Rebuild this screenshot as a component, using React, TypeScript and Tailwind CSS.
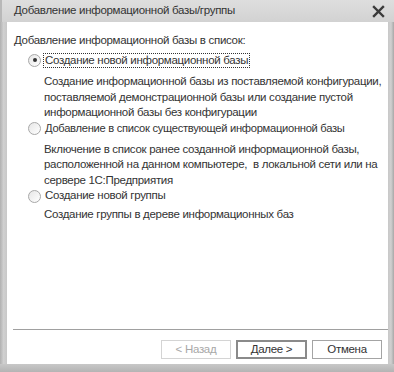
import React from "react";

const font = { fontFamily: '"Liberation Sans", Arial, sans-serif' };

function Radio({ checked }: { checked?: boolean }) {
  return (
    <span className="w-[13px] h-[13px] rounded-full border border-[#a8a8a8] bg-gradient-to-br from-[#e6e6e6] to-white flex items-center justify-center shrink-0">
      {checked && <span className="w-[4px] h-[4px] rounded-full bg-[#333]" />}
    </span>
  );
}

export default function App() {
  return (
    <div
      className="w-[394px] h-[372px] bg-[#cdcdcd] flex flex-col text-[#333] text-[11px] tracking-[-0.3px] overflow-hidden whitespace-nowrap"
      style={font}
    >
      <div className="h-[22px] shrink-0 flex items-center justify-between pl-[12px] pr-[8px] bg-gradient-to-b from-[#dedede] to-[#d2d2d2] border-l-[2px] border-[#b8b8b8]">
        <span className="text-[11.5px] text-[#333]">Добавление информационной базы/группы</span>
        <svg width="13" height="13" viewBox="0 0 13 13" className="mr-[1px]">
          <path d="M2 2 L11 11 M11 2 L2 11" stroke="#3a3a3a" strokeWidth="2.4" strokeLinecap="square" />
        </svg>
      </div>
      <div className="flex-1 flex min-h-0">
        <div className="w-[7px] shrink-0 bg-gradient-to-r from-[#b0b0b0] via-[#d0d0d0] to-[#c8c8c8]" />
        <div className="flex-1 bg-white flex flex-col pt-[10px] px-[6px]">
          <div className="leading-[16px] pl-[1px] text-[11.5px]">Добавление информационной базы в список:</div>
          <div className="mt-[4px] pl-[15px] flex items-center gap-[2px] h-[16px]">
            <Radio checked />
            <span className="border border-dotted border-[#333] leading-[13px] px-[1px] text-[11.5px]">Создание новой информационной базы</span>
          </div>
          <div className="pl-[31px] mt-[6px] leading-[15.5px] text-[11.5px]">
            Создание информационной базы из поставляемой конфигурации,
            <br />
            поставляемой демонстрационной базы или создание пустой
            <br />
            информационной базы без конфигурации
          </div>
          <div className="mt-[0px] pl-[15px] flex items-center gap-[4px] h-[16px] text-[11.2px]">
            <Radio />
            <span>Добавление в список существующей информационной базы</span>
          </div>
          <div className="pl-[31px] mt-[5px] leading-[15.5px] text-[11.5px]">
            Включение в список ранее созданной информационной базы,
            <br />
            расположенной на данном компьютере,&nbsp; в локальной сети или на
            <br />
            сервере 1С:Предприятия
          </div>
          <div className="mt-[0px] pl-[15px] flex items-center gap-[4px] h-[16px] text-[11.5px]">
            <Radio />
            <span>Создание новой группы</span>
          </div>
          <div className="pl-[31px] mt-[3px] leading-[15.5px] text-[11.5px]">Создание группы в дереве информационных баз</div>
          <div className="flex-1" />
          <div className="h-[1px] bg-[#a0a0a0] ml-[0px] -mr-[6px]" />
          <div className="flex justify-end gap-[5px] pt-[10px] pb-[5px] pr-[0px]">
            <button className="w-[70px] h-[19px] border border-[#d4d4d4] bg-white text-[#a8a8a8] leading-[17px] text-[11.5px]" style={font}>
              &lt; Назад
            </button>
            <button className="w-[71px] h-[19px] border-2 border-[#8a8a8a] bg-white text-[#333] leading-[15px] text-[11.5px]" style={font}>
              Далее &gt;
            </button>
            <button className="w-[70px] h-[19px] border border-[#a4a4a4] bg-white text-[#333] leading-[17px] text-[11.5px]" style={font}>
              Отмена
            </button>
          </div>
        </div>
        <div className="w-[6px] shrink-0 bg-gradient-to-r from-[#c8c8c8] via-[#d0d0d0] to-[#a8a8a8]" />
      </div>
      <div className="h-[8px] shrink-0 bg-gradient-to-b from-[#c8c8c8] to-[#b4b4b4]" />
    </div>
  );
}
